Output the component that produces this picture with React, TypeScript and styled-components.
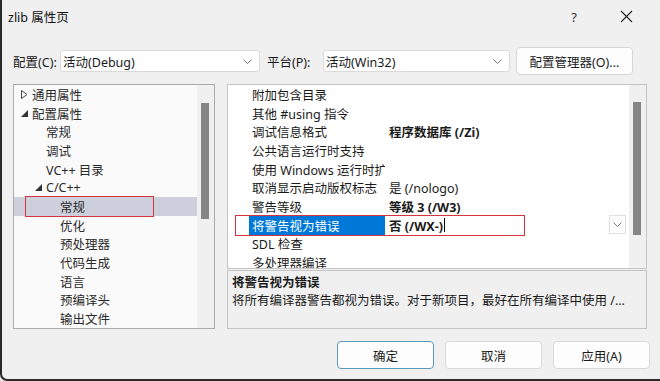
import styled, { createGlobalStyle } from 'styled-components';

const GlobalStyle = createGlobalStyle`
  html, body {
    margin: 0;
    padding: 0;
    background: #f0f0f0;
  }
  body {
    font-family: "Noto Sans", "Noto Sans CJK SC", sans-serif;
    font-size: 12.5px;
    color: #1a1a1a;
  }
`;

const ROW_H = 18.7;

type TreeItem = { label: string; level: number; arrow?: 'open' | 'closed'; selected?: boolean };

const treeItems: TreeItem[] = [
  { label: '通用属性', level: 0, arrow: 'closed' },
  { label: '配置属性', level: 0, arrow: 'open' },
  { label: '常规', level: 1 },
  { label: '调试', level: 1 },
  { label: 'VC++ 目录', level: 1 },
  { label: 'C/C++', level: 1, arrow: 'open' },
  { label: '常规', level: 2, selected: true },
  { label: '优化', level: 2 },
  { label: '预处理器', level: 2 },
  { label: '代码生成', level: 2 },
  { label: '语言', level: 2 },
  { label: '预编译头', level: 2 },
  { label: '输出文件', level: 2 },
];

type Prop = { name: string; value?: string; bold?: boolean; selected?: boolean };

const props: Prop[] = [
  { name: '附加包含目录' },
  { name: '其他 #using 指令' },
  { name: '调试信息格式', value: '程序数据库 (/Zi)', bold: true },
  { name: '公共语言运行时支持' },
  { name: '使用 Windows 运行时扩展' },
  { name: '取消显示启动版权标志', value: '是 (/nologo)' },
  { name: '警告等级', value: '等级 3 (/W3)', bold: true },
  { name: '将警告视为错误', value: '否 (/WX-)', bold: true, selected: true },
  { name: 'SDL 检查' },
  { name: '多处理器编译' },
];

const Chevron = () => (
  <svg width="9" height="5" viewBox="0 0 9 5">
    <polyline points="0.5,0.5 4.5,4.5 8.5,0.5" fill="none" stroke="#777" strokeWidth="1" />
  </svg>
);

const App = () => {
  return (
    <>
      <GlobalStyle />
      <Window>
        <TitleBar>
          <Title>zlib 属性页</Title>
          <TitleButtons>
            <HelpMark>?</HelpMark>
            <svg width="13" height="13" viewBox="0 0 13 13">
              <path d="M1 1 L12 12 M12 1 L1 12" stroke="#222" strokeWidth="1.1" />
            </svg>
          </TitleButtons>
        </TitleBar>

        <Toolbar>
          <Label>配置(C):</Label>
          <Combo $width={200}>
            <span>活动(Debug)</span>
            <Chevron />
          </Combo>
          <Label $gap={7}>平台(P):</Label>
          <Combo $width={187}>
            <span>活动(Win32)</span>
            <Chevron />
          </Combo>
          <ManagerButton>配置管理器(O)...</ManagerButton>
        </Toolbar>

        <Main>
          <TreePanel>
            <TreeList>
              {treeItems.map((item, i) => (
                <TreeRow key={i} $selected={item.selected}>
                  <TreeIndent $level={item.level}>
                    {item.arrow === 'closed' && (
                      <svg width="7" height="9" viewBox="0 0 7 9">
                        <polygon points="0.5,0.5 6,4.5 0.5,8.5" fill="none" stroke="#444" strokeWidth="1" />
                      </svg>
                    )}
                    {item.arrow === 'open' && (
                      <svg width="7" height="7" viewBox="0 0 7 7">
                        <polygon points="7,0 7,7 0,7" fill="#333" />
                      </svg>
                    )}
                  </TreeIndent>
                  <span>{item.label}</span>
                  {item.selected && <TreeMark />}
                </TreeRow>
              ))}
            </TreeList>
            <ScrollTrack>
              <Thumb $top={18} $height={116} />
            </ScrollTrack>
          </TreePanel>

          <RightColumn>
            <GridPanel>
              <GridRows>
                {props.map((p, i) => (
                  <PropRow key={i}>
                    <Gutter />
                    <NameCell $selected={p.selected}>{p.name}</NameCell>
                    <ValueCell $bold={p.bold}>
                      {p.value}
                      {p.selected && <Caret />}
                    </ValueCell>
                    {p.selected && (
                      <>
                        <DropButton>
                          <Chevron />
                        </DropButton>
                        <GridMark />
                      </>
                    )}
                  </PropRow>
                ))}
              </GridRows>
              <ScrollTrack>
                <Thumb $top={17} $height={133} />
              </ScrollTrack>
            </GridPanel>
            <Description>
              <DescTitle>将警告视为错误</DescTitle>
              <DescText>将所有编译器警告都视为错误。对于新项目，最好在所有编译中使用 /...</DescText>
            </Description>
          </RightColumn>
        </Main>

        <Footer>
          <DialogButton $focused>确定</DialogButton>
          <DialogButton>取消</DialogButton>
          <DialogButton>应用(A)</DialogButton>
        </Footer>
      </Window>
    </>
  );
};

const Window = styled.div`
  width: 660px;
  height: 381px;
  box-sizing: border-box;
  background: #f0f0f0;
  border-left: 2px solid #2a2a2a;
  border-bottom: 2px solid #2a2a2a;
  border-bottom-left-radius: 7px;
  display: flex;
  flex-direction: column;
  overflow: hidden;
`;
const TitleBar = styled.div`
  height: 33px;
  display: flex;
  align-items: center;
  justify-content: space-between;
  padding-left: 6px;
`;
const Title = styled.div`
  font-size: 12.5px;
  color: #111;
`;
const TitleButtons = styled.div`
  display: flex;
  align-items: center;
  gap: 43px;
  padding-right: 27px;
`;
const HelpMark = styled.span`
  font-size: 13px;
  color: #333;
`;
const Toolbar = styled.div`
  margin-top: 14px;
  height: 28px;
  display: flex;
  align-items: center;
  padding-left: 11px;
`;
const Label = styled.span<{ $gap?: number }>`
  width: ${(p) => (p.$gap ? 63 - p.$gap : 47)}px;
  margin-left: ${(p) => p.$gap ?? 0}px;
  white-space: nowrap;
`;
const Combo = styled.div<{ $width: number }>`
  width: ${(p) => p.$width}px;
  height: 22px;
  box-sizing: border-box;
  background: #fff;
  border: 1px solid #dadada;
  border-radius: 3px;
  display: flex;
  align-items: center;
  justify-content: space-between;
  padding: 0 7px 0 2px;
`;
const ManagerButton = styled.div`
  margin-left: 6px;
  width: 117px;
  height: 28px;
  box-sizing: border-box;
  background: #fdfdfd;
  border: 1px solid #d6d6d6;
  border-radius: 4px;
  display: flex;
  align-items: center;
  justify-content: center;
`;
const Main = styled.div`
  margin-top: 9px;
  height: 245px;
  display: flex;
  gap: 12px;
  padding: 0 13px 0 11px;
`;
const TreePanel = styled.div`
  width: 202px;
  box-sizing: border-box;
  border: 1px solid #ababab;
  background: #fafafa;
  display: flex;
`;
const TreeList = styled.div`
  flex: 1;
  overflow: hidden;
`;
const TreeRow = styled.div<{ $selected?: boolean }>`
  position: relative;
  height: ${ROW_H}px;
  display: flex;
  align-items: center;
  white-space: nowrap;
  color: #2a2a2a;
  background: ${(p) => (p.$selected ? '#cdd0dc' : 'transparent')};
`;
const TreeIndent = styled.div<{ $level: number }>`
  width: ${(p) => 18 + p.$level * 14}px;
  flex-shrink: 0;
  display: flex;
  justify-content: flex-end;
  align-items: center;
  padding-right: 4px;
  box-sizing: border-box;
`;
const TreeMark = styled.div`
  position: absolute;
  left: 11px;
  top: -1px;
  width: 129px;
  height: 21px;
  box-sizing: border-box;
  border: 1.5px solid #d5343f;
`;
const ScrollTrack = styled.div`
  position: relative;
  width: 17px;
  flex-shrink: 0;
  background: #f0f0f0;
`;
const Thumb = styled.div<{ $top: number; $height: number }>`
  position: absolute;
  left: 4px;
  top: ${(p) => p.$top}px;
  width: 8px;
  height: ${(p) => p.$height}px;
  background: #868686;
`;
const RightColumn = styled.div`
  flex: 1;
  display: flex;
  flex-direction: column;
  gap: 1px;
`;
const GridPanel = styled.div`
  height: 185px;
  box-sizing: border-box;
  border: 1px solid #c4c4c4;
  background: #fff;
  display: flex;
`;
const GridRows = styled.div`
  flex: 1;
  overflow: hidden;
`;
const PropRow = styled.div`
  position: relative;
  height: ${ROW_H}px;
  display: flex;
  align-items: stretch;
`;
const Gutter = styled.div`
  width: 21px;
  flex-shrink: 0;
`;
const NameCell = styled.div<{ $selected?: boolean }>`
  width: 136px;
  flex-shrink: 0;
  overflow: hidden;
  white-space: nowrap;
  display: flex;
  align-items: center;
  padding-left: 3px;
  box-sizing: border-box;
  background: ${(p) => (p.$selected ? '#0078d7' : 'transparent')};
  color: ${(p) => (p.$selected ? '#fff' : '#1a1a1a')};
`;
const ValueCell = styled.div<{ $bold?: boolean }>`
  flex: 1;
  display: flex;
  align-items: center;
  padding-left: 4px;
  white-space: nowrap;
  font-weight: ${(p) => (p.$bold ? 700 : 400)};
`;
const Caret = styled.span`
  width: 1px;
  height: 14px;
  background: #000;
  margin-left: 1px;
`;
const DropButton = styled.div`
  position: absolute;
  right: 3px;
  top: -1px;
  width: 17px;
  height: 19px;
  box-sizing: border-box;
  border: 1px solid #e0e0e0;
  background: #fff;
  display: flex;
  align-items: center;
  justify-content: center;
`;
const GridMark = styled.div`
  position: absolute;
  left: 7px;
  top: -1px;
  width: 290px;
  height: 21px;
  box-sizing: border-box;
  border: 1.5px solid #d5343f;
`;
const Description = styled.div`
  flex: 1;
  box-sizing: border-box;
  border: 1px solid #c4c4c4;
  padding: 3px 4px 0;
  overflow: hidden;
`;
const DescTitle = styled.div`
  font-weight: 700;
  line-height: 18px;
`;
const DescText = styled.div`
  line-height: 18px;
  white-space: nowrap;
`;
const Footer = styled.div`
  margin-top: 12px;
  height: 28px;
  display: flex;
  justify-content: flex-end;
  gap: 11px;
  padding-right: 10px;
`;
const DialogButton = styled.div<{ $focused?: boolean }>`
  width: 97px;
  height: 28px;
  box-sizing: border-box;
  background: #fdfdfd;
  border: 1px solid ${(p) => (p.$focused ? '#5b9bb8' : '#d9d9d9')};
  border-radius: 4px;
  display: flex;
  align-items: center;
  justify-content: center;
`;

export default App;
